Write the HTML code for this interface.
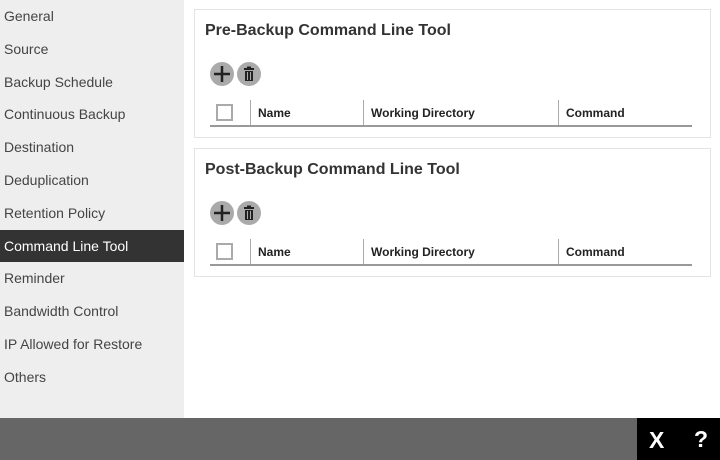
<!DOCTYPE html><html><head><style>
*{margin:0;padding:0;box-sizing:border-box}
body{width:720px;height:460px;overflow:hidden;background:#fff;font-family:"Liberation Sans",Arial,sans-serif;position:relative}
.side{position:absolute;left:0;top:0;width:184px;height:418px;background:#eee}
.side div{position:absolute;left:0;width:184px;height:33px;line-height:33px;padding-left:4px;font-size:14px;color:#444}
.side div.a{background:#333;color:#fff;height:32px;line-height:32px}
.panel{position:absolute;left:194px;width:517px;height:129px;border:1px solid #e3e3e3}
.panel h2{position:absolute;left:10px;top:12px;font-size:16px;font-weight:bold;color:#333}
.btn{position:absolute;top:52px;width:24px;height:24px;border-radius:50%;background:#aaa}
.cb{position:absolute;left:21px;top:94px;width:17px;height:17px;border:2px solid #aaa;background:#fff}
.col{position:absolute;top:90px;height:25px;border-left:1px solid #aaa;font-size:12px;font-weight:bold;color:#222;padding-left:7px;line-height:27px}
.line{position:absolute;left:15px;top:115px;width:482px;height:2px;background:#999}
.foot{position:absolute;left:0;top:418px;width:720px;height:42px;background:#666}
.fb{position:absolute;left:637px;top:418px;width:83px;height:42px;background:#000;color:#fff;font-weight:bold;font-size:23px}
</style></head><body>
<div class="side">
<div style="top:0">General</div><div style="top:33px">Source</div><div style="top:66px">Backup Schedule</div><div style="top:98px">Continuous Backup</div><div style="top:131px">Destination</div><div style="top:164px">Deduplication</div><div style="top:197px">Retention Policy</div><div class="a" style="top:230px">Command Line Tool</div><div style="top:262px">Reminder</div><div style="top:295px">Bandwidth Control</div><div style="top:328px">IP Allowed for Restore</div><div style="top:361px">Others</div>
</div>
<div class="panel" style="top:9px">
<h2>Pre-Backup Command Line Tool</h2>
<div class="btn" style="left:15px"><svg width="24" height="24"><path d="M12 4V20M4 12H20" stroke="#222" stroke-width="2.5"/></svg></div>
<div class="btn" style="left:42px"><svg width="24" height="24"><rect x="7" y="6" width="10" height="2" fill="#222"/><rect x="10" y="4.5" width="4" height="2" fill="#222"/><rect x="8" y="9" width="8" height="10" fill="#222"/><path d="M10.5 10V18M13.5 10V18" stroke="#aaa" stroke-width="1"/></svg></div>
<div class="cb"></div>
<div class="col" style="left:55px;width:113px">Name</div>
<div class="col" style="left:168px;width:195px">Working Directory</div>
<div class="col" style="left:363px;width:130px">Command</div>
<div class="line"></div>
</div>
<div class="panel" style="top:148px">
<h2>Post-Backup Command Line Tool</h2>
<div class="btn" style="left:15px"><svg width="24" height="24"><path d="M12 4V20M4 12H20" stroke="#222" stroke-width="2.5"/></svg></div>
<div class="btn" style="left:42px"><svg width="24" height="24"><rect x="7" y="6" width="10" height="2" fill="#222"/><rect x="10" y="4.5" width="4" height="2" fill="#222"/><rect x="8" y="9" width="8" height="10" fill="#222"/><path d="M10.5 10V18M13.5 10V18" stroke="#aaa" stroke-width="1"/></svg></div>
<div class="cb"></div>
<div class="col" style="left:55px;width:113px">Name</div>
<div class="col" style="left:168px;width:195px">Working Directory</div>
<div class="col" style="left:363px;width:130px">Command</div>
<div class="line"></div>
</div>
<div class="foot"></div>
<div class="fb"><span style="position:absolute;left:12px;top:9px">X</span><span style="position:absolute;left:57px;top:8px">?</span></div>
</body></html>
